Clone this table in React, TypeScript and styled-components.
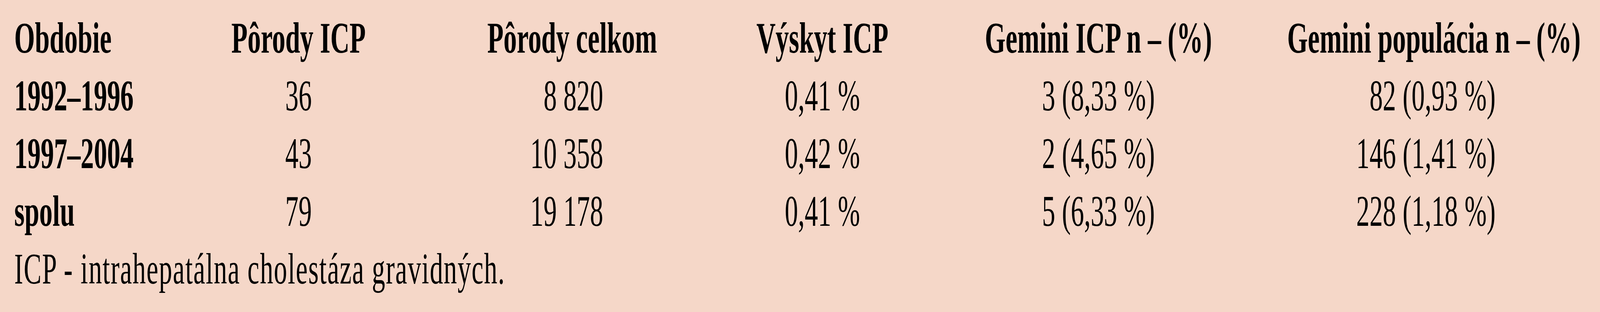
import React, { useEffect, useState } from 'react'
import styled, { createGlobalStyle } from 'styled-components'

// the table is laid out at the 6753px design width and squeezed to the window width
const DESIGN_WIDTH = 6753

const GlobalStyle = createGlobalStyle`
  html, body {
    margin: 0;
    padding: 0;
    overflow: hidden;
    background: #f5d7c8;
  }
`

const Page = styled.div`
  width: 100vw;
  height: 800px;
  overflow: hidden;
  background: #f5d7c8;
`

const Wrapper = styled.div`
  width: ${DESIGN_WIDTH}px;
  height: 800px;
  box-sizing: border-box;
  padding: 23px 0 0 60px;
  transform-origin: 0 0;
  color: #000;
  font-family: "Liberation Serif", "Times New Roman", serif;
  font-size: 112px;
  line-height: 148px;
`

const Table = styled.div`
  display: grid;
  grid-template-columns: 620px 1160px 1150px 962px 1368px 1433px;
  grid-auto-rows: 148px;
`

const Cell = styled.div<{ $align?: 'left' | 'center' | 'right'; $pad?: number; $bold?: boolean }>`
  white-space: nowrap;
  text-align: ${(p) => p.$align || 'center'};
  padding-right: ${(p) => p.$pad || 0}px;
  font-weight: ${(p) => (p.$bold ? 700 : 400)};
`

const Note = styled.div`
  white-space: nowrap;
  letter-spacing: 2.8px;
`

type Row = {
  period: string;
  icp: string;
  total: string;
  rate: string;
  geminiIcp: string;
  geminiPop: string;
}

const rows: Row[] = [
  { period: '1992–1996', icp: '36', total: '8 820', rate: '0,41 %', geminiIcp: '3 (8,33 %)', geminiPop: '82 (0,93 %)' },
  { period: '1997–2004', icp: '43', total: '10 358', rate: '0,42 %', geminiIcp: '2 (4,65 %)', geminiPop: '146 (1,41 %)' },
  { period: 'spolu', icp: '79', total: '19 178', rate: '0,41 %', geminiIcp: '5 (6,33 %)', geminiPop: '228 (1,18 %)' },
]

const useScaleX = () => {
  const [scale, setScale] = useState(() => Math.min(1, window.innerWidth / DESIGN_WIDTH))
  useEffect(() => {
    const onResize = () => setScale(Math.min(1, window.innerWidth / DESIGN_WIDTH))
    window.addEventListener('resize', onResize)
    return () => window.removeEventListener('resize', onResize)
  }, [])
  return scale
}

export default function App() {
  const scale = useScaleX()
  return (
    <Page>
      <GlobalStyle />
      <Wrapper style={{ transform: `scaleX(${scale})` }}>
        <Table>
          <Cell $align='left' $bold>Obdobie</Cell>
          <Cell $bold>Pôrody ICP</Cell>
          <Cell $bold>Pôrody celkom</Cell>
          <Cell $bold>Výskyt ICP</Cell>
          <Cell $bold>Gemini ICP n – (%)</Cell>
          <Cell $align='right' $pad={82} $bold>Gemini populácia n – (%)</Cell>
          {rows.map((r) => (
            <React.Fragment key={r.period}>
              <Cell $align='left' $bold>{r.period}</Cell>
              <Cell>{r.icp}</Cell>
              <Cell $align='right' $pad={444}>{r.total}</Cell>
              <Cell>{r.rate}</Cell>
              <Cell>{r.geminiIcp}</Cell>
              <Cell $align='right' $pad={441}>{r.geminiPop}</Cell>
            </React.Fragment>
          ))}
        </Table>
        <Note>ICP - intrahepatálna cholestáza gravidných.</Note>
      </Wrapper>
    </Page>
  )
}
